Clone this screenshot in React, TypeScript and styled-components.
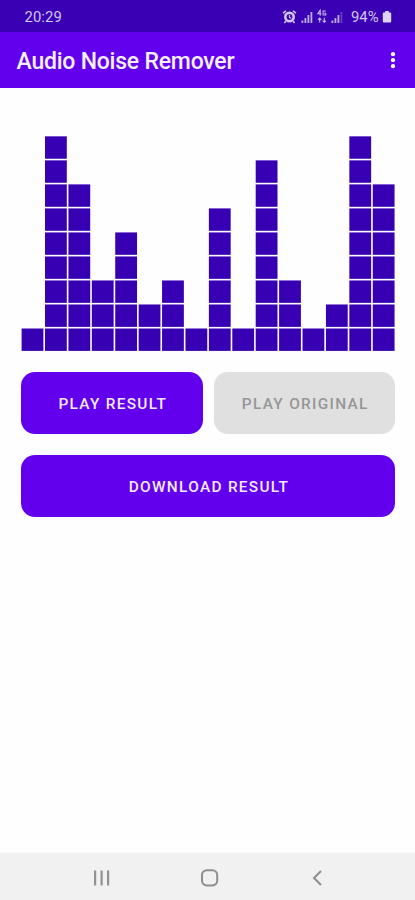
import React from "react";
import styled, { createGlobalStyle } from "styled-components";

const GlobalStyle = createGlobalStyle`
  * { box-sizing: border-box; }
  body { margin: 0; background: #fff; font-family: Roboto, sans-serif; }
`;

const Screen = styled.div`
  display: flex;
  flex-direction: column;
  width: 415px;
  height: 900px;
  overflow: hidden;
  background: #fefefe;
`;

const StatusBar = styled.header`
  display: flex;
  justify-content: space-between;
  align-items: center;
  height: 32px;
  padding: 1px 23px 0 24.5px;
  background: #3a00b4;
  color: #d2c5f0;
  font-size: 14.8px;
`;

const Clock = styled.span`
  letter-spacing: 0.1px;
`;

const StatusItems = styled.div`
  display: flex;
  align-items: center;
`;

const StatusIcons = styled.div`
  display: flex;
  align-items: center;
  gap: 4px;
`;

const Battery = styled.span`
  width: 29px;
  margin: 0 2px 0 8px;
  font-size: 14.8px;
`;

const AppBar = styled.div`
  display: flex;
  justify-content: space-between;
  align-items: center;
  height: 56px;
  padding: 2px 18px 0 16.5px;
  background: #6200ee;
`;

const Title = styled.h1`
  margin: 0;
  color: #f7f0ff;
  font-size: 23px;
  font-weight: 500;
  letter-spacing: -0.22px;
  white-space: nowrap;
`;

const MenuButton = styled.button`
  display: flex;
  padding: 0;
  border: 0;
  background: none;
`;

const Content = styled.main`
  flex: 1;
  display: flex;
  flex-direction: column;
  padding: 48px 20px 0 21px;
`;

const Chart = styled.svg`
  display: block;
  width: 374px;
  height: 216px;
  margin-bottom: 20px;
`;

const ButtonRow = styled.div`
  display: flex;
  gap: 11px;
  margin-bottom: 21px;
`;

const ActionButton = styled.button<{ $muted?: boolean }>`
  flex: 1;
  height: 62px;
  padding: 2px 0 0 2px;
  border: 0;
  border-radius: 14px;
  background: ${(p) => (p.$muted ? "#e0e0e0" : "#6200ee")};
  color: ${(p) => (p.$muted ? "#969696" : "#f3eaff")};
  font: 500 15.4px Roboto, sans-serif;
  letter-spacing: 1.3px;
  white-space: nowrap;
`;

const WideButton = styled(ActionButton)`
  flex: none;
  width: 100%;
`;

const NavBar = styled.nav`
  display: flex;
  align-items: center;
  height: 47px;
  padding: 2px 0 0 93px;
  gap: 89.5px;
  background: #f1f1f1;
`;

const LEVELS = [1, 9, 7, 3, 5, 2, 3, 1, 6, 1, 8, 3, 1, 2, 9, 7];
const PITCH_X = 23.41;
const PITCH_Y = 24.02;

const Spectrum = () => (
  <Chart viewBox="0 0 374 216" fill="#3700b3">
    {LEVELS.flatMap((level, col) =>
      Array.from({ length: level }, (_, row) => (
        <rect
          key={`${col}-${row}`}
          x={0.6 + col * PITCH_X}
          y={192.5 - row * PITCH_Y}
          width={21.8}
          height={22.4}
        />
      ))
    )}
  </Chart>
);

const AlarmIcon = () => (
  <svg width="15" height="16" viewBox="0 0 15 16" fill="none" stroke="#d2c5f0">
    <circle cx="7.5" cy="8" r="4.2" strokeWidth="2.6" />
    <path d="M7.5 5.8v2.7l1.8 1" strokeWidth="1.2" />
    <path d="M1 4.2 4 1.8M14 4.2 11 1.8M3.8 12.2 2.4 14M11.2 12.2 12.6 14" strokeWidth="1.5" />
  </svg>
);

const SignalIcon = ({ dim }: { dim?: boolean }) => (
  <svg width="12" height="14" viewBox="0 0 12 14" fill="#bfaae8">
    <rect x="0.5" y="10.5" width="1.8" height="2.5" />
    <rect x="3.5" y="8" width="1.8" height="5" />
    <rect x="6.5" y="5" width="1.8" height="8" />
    <rect x="9.5" y="2" width="1.8" height="11" opacity={dim ? 0.35 : 1} />
  </svg>
);

const NetworkIcon = () => (
  <svg width="10" height="15" viewBox="0 0 10 15" fill="none" stroke="#c9b9ec" strokeWidth="1.1">
    <path d="M3.2 6.8V1.2L.8 4.8h3.6M8.9 2H6.1v4h2.7V4.3H7.4" />
    <path d="M2.7 13.5V9M1 10.8 2.7 9l1.7 1.8M7.3 8.8v4.5M5.6 11.6l1.7 1.7L9 11.6" />
  </svg>
);

const BatteryIcon = () => (
  <svg width="10" height="14" viewBox="0 0 10 14" fill="#ded4f5">
    <path d="M3.2 1h3.6v1.5h1.5q.9 0 .9.9v8.2q0 .9-.9.9H1.7q-.9 0-.9-.9V3.4q0-.9.9-.9h1.5z" />
  </svg>
);

export default function App() {
  return (
    <>
      <GlobalStyle />
      <Screen>
        <StatusBar>
          <Clock>20:29</Clock>
          <StatusItems>
            <StatusIcons>
              <AlarmIcon />
              <SignalIcon />
              <NetworkIcon />
              <SignalIcon dim />
            </StatusIcons>
            <Battery>94%</Battery>
            <BatteryIcon />
          </StatusItems>
        </StatusBar>
        <AppBar>
          <Title>Audio Noise Remover</Title>
          <MenuButton aria-label="More options">
            <svg width="8" height="18" viewBox="0 0 8 18" fill="#fff">
              <circle cx="4" cy="2.2" r="2.1" />
              <circle cx="4" cy="8.2" r="2.1" />
              <circle cx="4" cy="14.2" r="2.1" />
            </svg>
          </MenuButton>
        </AppBar>
        <Content>
          <Spectrum />
          <ButtonRow>
            <ActionButton>PLAY RESULT</ActionButton>
            <ActionButton $muted>PLAY ORIGINAL</ActionButton>
          </ButtonRow>
          <WideButton>DOWNLOAD RESULT</WideButton>
        </Content>
        <NavBar>
          <svg width="18" height="18" viewBox="0 0 18 18" fill="#929292">
            <rect x="1" y="1.5" width="2.2" height="15" />
            <rect x="7.5" y="1.5" width="2.2" height="15" />
            <rect x="14" y="1.5" width="2.2" height="15" />
          </svg>
          <svg width="18" height="18" viewBox="0 0 18 18" fill="none" stroke="#8e8e8e" strokeWidth="2">
            <rect x="1" y="1.2" width="15.2" height="15.2" rx="4.8" />
          </svg>
          <svg width="18" height="18" viewBox="0 0 18 18" fill="none" stroke="#8e8e8e" strokeWidth="2">
            <path d="M13 2 6 9l7 7" />
          </svg>
        </NavBar>
      </Screen>
    </>
  );
}
